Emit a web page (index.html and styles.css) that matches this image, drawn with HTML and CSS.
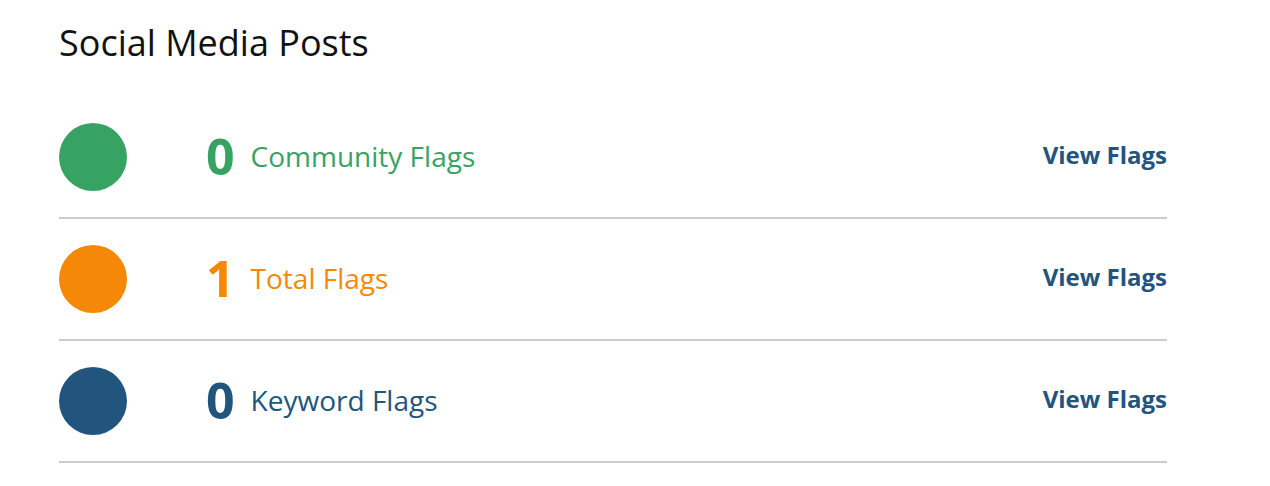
FILE: index.html
```html
<!DOCTYPE html>
<html lang="en">
<head>
<meta charset="utf-8">
<title>Social Media Posts</title>
<link rel="stylesheet" href="styles.css">
</head>
<body>
<section class="panel">
  <h1 class="title">Social Media Posts</h1>
  <ul class="flags">
    <li class="flag flag-green">
      <span class="dot"></span>
      <span class="count">0</span>
      <span class="label">Community Flags</span>
      <a class="view" href="#">View Flags</a>
    </li>
    <li class="flag flag-orange">
      <span class="dot"></span>
      <span class="count">1</span>
      <span class="label">Total Flags</span>
      <a class="view" href="#">View Flags</a>
    </li>
    <li class="flag flag-blue">
      <span class="dot"></span>
      <span class="count">0</span>
      <span class="label">Keyword Flags</span>
      <a class="view" href="#">View Flags</a>
    </li>
  </ul>
</section>
</body>
</html>
```

FILE: styles.css
```css
html, body {
  margin: 0;
  padding: 0;
  background: #ffffff;
}

body {
  font-family: "Open Sans", "Noto Sans", sans-serif;
}

.panel {
  width: 1108px;
  padding: 18px 0 0 59px;
}

.title {
  margin: 0 0 30px 0;
  font-size: 36px;
  font-weight: 400;
  line-height: 49px;
  color: #111111;
}

.flags {
  list-style: none;
  margin: 0;
  padding: 0;
}

.flag {
  display: flex;
  align-items: center;
  padding: 26px 0;
  border-bottom: 2px solid #cccccc;
}

.dot {
  width: 68px;
  height: 68px;
  border-radius: 50%;
  flex: none;
}

.count {
  margin: 0 0 2px 79px;
  font-size: 50px;
  font-weight: 700;
  line-height: 1;
}

.label {
  margin: 0 0 2px 16px;
  font-size: 28px;
  font-weight: 400;
}

.view {
  margin: 0 0 6px auto;
  font-size: 24px;
  font-weight: 700;
  color: #22557d;
  text-decoration: none;
}

.flag-green .dot { background: #37a363; }
.flag-green .count,
.flag-green .label { color: #37a363; }

.flag-orange .dot { background: #f58806; }
.flag-orange .count,
.flag-orange .label { color: #f58806; }

.flag-blue .dot { background: #22557d; }
.flag-blue .count,
.flag-blue .label { color: #22557d; }
```
